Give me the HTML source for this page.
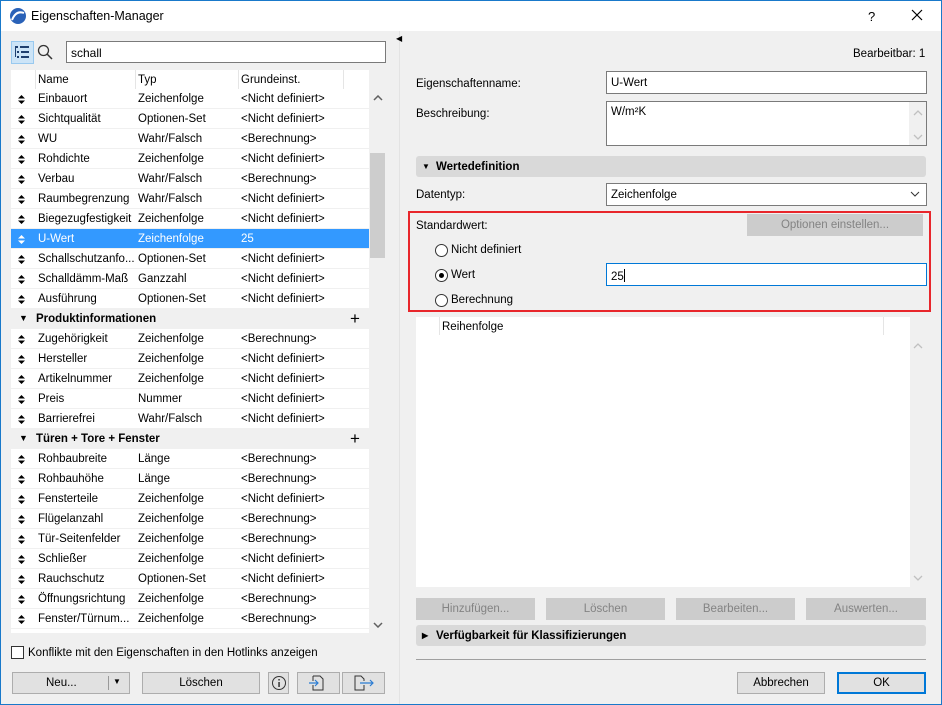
<!DOCTYPE html>
<html><head><meta charset="utf-8"><style>
*{margin:0;padding:0;box-sizing:border-box}
body{width:942px;height:705px;overflow:hidden;font-family:"Liberation Sans",sans-serif;font-size:11.5px;color:#000;background:#f0f0f0;position:relative}
.a{position:absolute}
.win{left:0;top:0;width:942px;height:705px;border:1px solid #1979ca}
.title{left:1px;top:1px;width:940px;height:30px;background:#fff}
.row{position:absolute;left:11px;width:358px;height:20px;border-bottom:1px solid #f0f0f0;background:#fff;white-space:nowrap}
.row span{position:absolute;top:4px}
.row .n{left:27px}.row .t{left:127px}.row .d{left:230px}
.row svg{position:absolute;left:7px;top:6px}
.sel{background:#3399ff;color:#fff}
.sel svg path{fill:#fff}
.grp{background:#f0f0f0;font-weight:bold}
.btn{position:absolute;height:22px;background:#e1e1e1;border:1px solid #adadad;text-align:center;line-height:20px}
.dis{background:#cccccc;border-color:#cccccc;color:#838383}
.inp{position:absolute;background:#fff;border:1px solid #7a7a7a;padding:5px 4px 0}
.rad{position:absolute;width:13px;height:13px;border:1px solid #333;border-radius:50%;background:#fff}
.sec{position:absolute;left:416px;width:510px;height:21px;background:#d9d9d9;border-radius:3px;font-weight:bold;line-height:22px;padding-left:20px}
</style></head><body>
<div class="a win"></div>
<div class="a title"></div>
<svg class="a" style="left:9px;top:7px" width="18" height="18"><circle cx="9" cy="9" r="8" fill="#2a62b8"/><path d="M3 13 Q7 3 15 6" stroke="#fff" stroke-width="2" fill="none"/></svg>
<div class="a" style="left:31px;top:9px;font-size:12.5px">Eigenschaften-Manager</div>
<div class="a" style="left:868px;top:9px;font-size:13px">?</div>
<svg class="a" style="left:911px;top:9px" width="12" height="12"><path d="M1 1L11 11M11 1L1 11" stroke="#000" stroke-width="1.2"/></svg>

<div class="a" style="left:11px;top:41px;width:23px;height:23px;background:#cce4f7;border:1px solid #99c9ef"></div>
<svg class="a" style="left:15px;top:46px" width="15" height="13"><g fill="#1f3f6e"><rect x="0" y="0" width="3" height="2"/><rect x="5" y="0" width="9" height="2"/><rect x="2" y="5" width="2" height="2"/><rect x="6" y="5" width="8" height="2"/><rect x="2" y="10" width="2" height="2"/><rect x="6" y="10" width="8" height="2"/><rect x="0" y="2" width="1" height="9"/></g></svg>
<svg class="a" style="left:37px;top:44px" width="16" height="16"><circle cx="6.5" cy="6.5" r="5" stroke="#333" stroke-width="1.3" fill="none"/><path d="M10 10L15 15" stroke="#333" stroke-width="1.5"/></svg>
<div class="inp" style="left:66px;top:41px;width:320px;height:22px;font-size:12px;padding-top:4px">schall</div>

<div class="a" style="left:11px;top:70px;width:358px;height:563px;background:#fff"></div>
<div class="a" style="left:35px;top:70px;width:1px;height:19px;background:#e5e5e5"></div>
<div class="a" style="left:135px;top:70px;width:1px;height:19px;background:#e5e5e5"></div>
<div class="a" style="left:238px;top:70px;width:1px;height:19px;background:#e5e5e5"></div>
<div class="a" style="left:343px;top:70px;width:1px;height:19px;background:#e5e5e5"></div>
<div class="a" style="left:38px;top:74px">Name</div>
<div class="a" style="left:138px;top:74px">Typ</div>
<div class="a" style="left:241px;top:74px">Grundeinst.</div>
<div class="a" style="left:370px;top:89px;width:15px;height:544px;background:#f0f0f0"></div>
<div class="a" style="left:370px;top:153px;width:15px;height:105px;background:#cdcdcd"></div>
<svg class="a" style="left:373px;top:95px" width="10" height="6"><path d="M1 5L5 1L9 5" stroke="#606060" stroke-width="1.5" fill="none"/></svg>
<svg class="a" style="left:373px;top:622px" width="10" height="6"><path d="M1 1L5 5L9 1" stroke="#606060" stroke-width="1.5" fill="none"/></svg>

<div id="rows"></div>
<div class="row" style="top:89px"><svg width="7" height="9"><path d="M0 3.5L3.5 0L7 3.5ZM0 5.5L3.5 9L7 5.5Z" fill="#000"/></svg><span class="n">Einbauort</span><span class="t">Zeichenfolge</span><span class="d">&lt;Nicht definiert&gt;</span></div>
<div class="row" style="top:109px"><svg width="7" height="9"><path d="M0 3.5L3.5 0L7 3.5ZM0 5.5L3.5 9L7 5.5Z" fill="#000"/></svg><span class="n">Sichtqualität</span><span class="t">Optionen-Set</span><span class="d">&lt;Nicht definiert&gt;</span></div>
<div class="row" style="top:129px"><svg width="7" height="9"><path d="M0 3.5L3.5 0L7 3.5ZM0 5.5L3.5 9L7 5.5Z" fill="#000"/></svg><span class="n">WU</span><span class="t">Wahr/Falsch</span><span class="d">&lt;Berechnung&gt;</span></div>
<div class="row" style="top:149px"><svg width="7" height="9"><path d="M0 3.5L3.5 0L7 3.5ZM0 5.5L3.5 9L7 5.5Z" fill="#000"/></svg><span class="n">Rohdichte</span><span class="t">Zeichenfolge</span><span class="d">&lt;Nicht definiert&gt;</span></div>
<div class="row" style="top:169px"><svg width="7" height="9"><path d="M0 3.5L3.5 0L7 3.5ZM0 5.5L3.5 9L7 5.5Z" fill="#000"/></svg><span class="n">Verbau</span><span class="t">Wahr/Falsch</span><span class="d">&lt;Berechnung&gt;</span></div>
<div class="row" style="top:189px"><svg width="7" height="9"><path d="M0 3.5L3.5 0L7 3.5ZM0 5.5L3.5 9L7 5.5Z" fill="#000"/></svg><span class="n">Raumbegrenzung</span><span class="t">Wahr/Falsch</span><span class="d">&lt;Nicht definiert&gt;</span></div>
<div class="row" style="top:209px"><svg width="7" height="9"><path d="M0 3.5L3.5 0L7 3.5ZM0 5.5L3.5 9L7 5.5Z" fill="#000"/></svg><span class="n">Biegezugfestigkeit</span><span class="t">Zeichenfolge</span><span class="d">&lt;Nicht definiert&gt;</span></div>
<div class="row sel" style="top:229px"><svg width="7" height="9"><path d="M0 3.5L3.5 0L7 3.5ZM0 5.5L3.5 9L7 5.5Z" fill="#000"/></svg><span class="n">U-Wert</span><span class="t">Zeichenfolge</span><span class="d">25</span></div>
<div class="row" style="top:249px"><svg width="7" height="9"><path d="M0 3.5L3.5 0L7 3.5ZM0 5.5L3.5 9L7 5.5Z" fill="#000"/></svg><span class="n">Schallschutzanfo...</span><span class="t">Optionen-Set</span><span class="d">&lt;Nicht definiert&gt;</span></div>
<div class="row" style="top:269px"><svg width="7" height="9"><path d="M0 3.5L3.5 0L7 3.5ZM0 5.5L3.5 9L7 5.5Z" fill="#000"/></svg><span class="n">Schalldämm-Maß</span><span class="t">Ganzzahl</span><span class="d">&lt;Nicht definiert&gt;</span></div>
<div class="row" style="top:289px"><svg width="7" height="9"><path d="M0 3.5L3.5 0L7 3.5ZM0 5.5L3.5 9L7 5.5Z" fill="#000"/></svg><span class="n">Ausführung</span><span class="t">Optionen-Set</span><span class="d">&lt;Nicht definiert&gt;</span></div>
<div class="row grp" style="top:309px"><span style="left:8px;top:4px;font-size:9px">▼</span><span style="left:25px">Produktinformationen</span><span style="left:339px;top:0;font-size:17px;font-weight:normal">+</span></div>
<div class="row" style="top:329px"><svg width="7" height="9"><path d="M0 3.5L3.5 0L7 3.5ZM0 5.5L3.5 9L7 5.5Z" fill="#000"/></svg><span class="n">Zugehörigkeit</span><span class="t">Zeichenfolge</span><span class="d">&lt;Berechnung&gt;</span></div>
<div class="row" style="top:349px"><svg width="7" height="9"><path d="M0 3.5L3.5 0L7 3.5ZM0 5.5L3.5 9L7 5.5Z" fill="#000"/></svg><span class="n">Hersteller</span><span class="t">Zeichenfolge</span><span class="d">&lt;Nicht definiert&gt;</span></div>
<div class="row" style="top:369px"><svg width="7" height="9"><path d="M0 3.5L3.5 0L7 3.5ZM0 5.5L3.5 9L7 5.5Z" fill="#000"/></svg><span class="n">Artikelnummer</span><span class="t">Zeichenfolge</span><span class="d">&lt;Nicht definiert&gt;</span></div>
<div class="row" style="top:389px"><svg width="7" height="9"><path d="M0 3.5L3.5 0L7 3.5ZM0 5.5L3.5 9L7 5.5Z" fill="#000"/></svg><span class="n">Preis</span><span class="t">Nummer</span><span class="d">&lt;Nicht definiert&gt;</span></div>
<div class="row" style="top:409px"><svg width="7" height="9"><path d="M0 3.5L3.5 0L7 3.5ZM0 5.5L3.5 9L7 5.5Z" fill="#000"/></svg><span class="n">Barrierefrei</span><span class="t">Wahr/Falsch</span><span class="d">&lt;Nicht definiert&gt;</span></div>
<div class="row grp" style="top:429px"><span style="left:8px;top:4px;font-size:9px">▼</span><span style="left:25px">Türen + Tore + Fenster</span><span style="left:339px;top:0;font-size:17px;font-weight:normal">+</span></div>
<div class="row" style="top:449px"><svg width="7" height="9"><path d="M0 3.5L3.5 0L7 3.5ZM0 5.5L3.5 9L7 5.5Z" fill="#000"/></svg><span class="n">Rohbaubreite</span><span class="t">Länge</span><span class="d">&lt;Berechnung&gt;</span></div>
<div class="row" style="top:469px"><svg width="7" height="9"><path d="M0 3.5L3.5 0L7 3.5ZM0 5.5L3.5 9L7 5.5Z" fill="#000"/></svg><span class="n">Rohbauhöhe</span><span class="t">Länge</span><span class="d">&lt;Berechnung&gt;</span></div>
<div class="row" style="top:489px"><svg width="7" height="9"><path d="M0 3.5L3.5 0L7 3.5ZM0 5.5L3.5 9L7 5.5Z" fill="#000"/></svg><span class="n">Fensterteile</span><span class="t">Zeichenfolge</span><span class="d">&lt;Nicht definiert&gt;</span></div>
<div class="row" style="top:509px"><svg width="7" height="9"><path d="M0 3.5L3.5 0L7 3.5ZM0 5.5L3.5 9L7 5.5Z" fill="#000"/></svg><span class="n">Flügelanzahl</span><span class="t">Zeichenfolge</span><span class="d">&lt;Berechnung&gt;</span></div>
<div class="row" style="top:529px"><svg width="7" height="9"><path d="M0 3.5L3.5 0L7 3.5ZM0 5.5L3.5 9L7 5.5Z" fill="#000"/></svg><span class="n">Tür-Seitenfelder</span><span class="t">Zeichenfolge</span><span class="d">&lt;Berechnung&gt;</span></div>
<div class="row" style="top:549px"><svg width="7" height="9"><path d="M0 3.5L3.5 0L7 3.5ZM0 5.5L3.5 9L7 5.5Z" fill="#000"/></svg><span class="n">Schließer</span><span class="t">Zeichenfolge</span><span class="d">&lt;Nicht definiert&gt;</span></div>
<div class="row" style="top:569px"><svg width="7" height="9"><path d="M0 3.5L3.5 0L7 3.5ZM0 5.5L3.5 9L7 5.5Z" fill="#000"/></svg><span class="n">Rauchschutz</span><span class="t">Optionen-Set</span><span class="d">&lt;Nicht definiert&gt;</span></div>
<div class="row" style="top:589px"><svg width="7" height="9"><path d="M0 3.5L3.5 0L7 3.5ZM0 5.5L3.5 9L7 5.5Z" fill="#000"/></svg><span class="n">Öffnungsrichtung</span><span class="t">Zeichenfolge</span><span class="d">&lt;Berechnung&gt;</span></div>
<div class="row" style="top:609px"><svg width="7" height="9"><path d="M0 3.5L3.5 0L7 3.5ZM0 5.5L3.5 9L7 5.5Z" fill="#000"/></svg><span class="n">Fenster/Türnum...</span><span class="t">Zeichenfolge</span><span class="d">&lt;Berechnung&gt;</span></div>

<div class="a" style="left:11px;top:646px;width:13px;height:13px;border:1px solid #333;background:#fff"></div>
<div class="a" style="left:28px;top:647px">Konflikte mit den Eigenschaften in den Hotlinks anzeigen</div>
<div class="btn" style="left:12px;top:672px;width:118px;text-align:left;padding-left:33px">Neu...</div>
<div class="a" style="left:108px;top:676px;width:1px;height:14px;background:#999"></div>
<div class="a" style="left:113px;top:677px;font-size:8px">▼</div>
<div class="btn" style="left:142px;top:672px;width:118px">Löschen</div>
<div class="btn" style="left:268px;top:672px;width:21px"></div>
<svg class="a" style="left:271px;top:675px" width="16" height="16"><circle cx="8" cy="8" r="6.5" stroke="#333" fill="none"/><rect x="7.3" y="7" width="1.5" height="5" fill="#333"/><rect x="7.3" y="4" width="1.5" height="1.5" fill="#333"/></svg>
<div class="btn" style="left:297px;top:672px;width:43px"></div>
<svg class="a" style="left:308px;top:674px" width="20" height="18"><path d="M5 2H12L15 5V16H5V11M5 7V2" stroke="#333" fill="none"/><path d="M1 9H10M7 6L10 9L7 12" stroke="#2b7cd3" stroke-width="1.2" fill="none"/></svg>
<div class="btn" style="left:342px;top:672px;width:43px"></div>
<svg class="a" style="left:354px;top:674px" width="22" height="18"><path d="M10 11V16H1V2H7L10 5V7" stroke="#333" fill="none"/><path d="M6 9H19M16 6L19 9L16 12" stroke="#2b7cd3" stroke-width="1.2" fill="none"/></svg>

<div class="a" style="left:399px;top:31px;width:1px;height:673px;background:#e3e3e3"></div>
<div class="a" style="left:396px;top:34px;font-size:8px">◀</div>

<div class="a" style="left:853px;top:48px">Bearbeitbar: 1</div>
<div class="a" style="left:416px;top:78px">Eigenschaftenname:</div>
<div class="inp" style="left:606px;top:71px;width:321px;height:23px">U-Wert</div>
<div class="a" style="left:416px;top:108px">Beschreibung:</div>
<div class="inp" style="left:606px;top:101px;width:321px;height:45px;padding-top:4px">W/m²K</div>
<div class="a" style="left:909px;top:102px;width:17px;height:43px;background:#f0f0f0"></div>
<svg class="a" style="left:913px;top:110px" width="10" height="6"><path d="M1 5L5 1L9 5" stroke="#c0c0c0" stroke-width="1.3" fill="none"/></svg>
<svg class="a" style="left:913px;top:134px" width="10" height="6"><path d="M1 1L5 5L9 1" stroke="#c0c0c0" stroke-width="1.3" fill="none"/></svg>
<div class="sec" style="top:156px"><span style="position:absolute;left:6px;font-size:8px">▼</span>Wertedefinition</div>
<div class="a" style="left:416px;top:189px">Datentyp:</div>
<div class="inp" style="left:606px;top:183px;width:321px;height:23px">Zeichenfolge</div>
<svg class="a" style="left:910px;top:191px" width="10" height="6"><path d="M1 1L5 5L9 1" stroke="#333" fill="none"/></svg>

<div class="a" style="left:408px;top:211px;width:523px;height:101px;border:2px solid #e8262b"></div>
<div class="a" style="left:416px;top:220px">Standardwert:</div>
<div class="btn dis" style="left:747px;top:214px;width:176px">Optionen einstellen...</div>
<div class="rad" style="left:435px;top:244px"></div>
<div class="a" style="left:451px;top:244px">Nicht definiert</div>
<div class="rad" style="left:435px;top:269px"></div>
<div class="a" style="left:439px;top:273px;width:5px;height:5px;border-radius:50%;background:#000"></div>
<div class="a" style="left:451px;top:269px">Wert</div>
<div class="inp" style="left:606px;top:263px;width:321px;height:23px;border-color:#0078d7">25<span style="display:inline-block;width:1px;height:13px;background:#000;vertical-align:-2px"></span></div>
<div class="rad" style="left:435px;top:294px"></div>
<div class="a" style="left:451px;top:294px">Berechnung</div>

<div class="a" style="left:416px;top:317px;width:494px;height:270px;background:#fff"></div>
<div class="a" style="left:439px;top:317px;width:1px;height:18px;background:#e5e5e5"></div>
<div class="a" style="left:883px;top:317px;width:1px;height:18px;background:#e5e5e5"></div>
<div class="a" style="left:442px;top:321px">Reihenfolge</div>
<div class="a" style="left:910px;top:317px;width:16px;height:270px;background:#f0f0f0"></div>
<svg class="a" style="left:913px;top:343px" width="10" height="6"><path d="M1 5L5 1L9 5" stroke="#c0c0c0" stroke-width="1.3" fill="none"/></svg>
<svg class="a" style="left:913px;top:575px" width="10" height="6"><path d="M1 1L5 5L9 1" stroke="#c0c0c0" stroke-width="1.3" fill="none"/></svg>

<div class="btn dis" style="left:416px;top:598px;width:119px">Hinzufügen...</div>
<div class="btn dis" style="left:546px;top:598px;width:119px">Löschen</div>
<div class="btn dis" style="left:676px;top:598px;width:119px">Bearbeiten...</div>
<div class="btn dis" style="left:806px;top:598px;width:120px">Auswerten...</div>
<div class="sec" style="top:625px"><span style="position:absolute;left:6px;font-size:8px">▶</span>Verfügbarkeit für Klassifizierungen</div>
<div class="a" style="left:416px;top:659px;width:510px;height:1px;background:#a0a0a0"></div>
<div class="btn" style="left:737px;top:672px;width:88px">Abbrechen</div>
<div class="btn" style="left:837px;top:672px;width:89px;border:2px solid #0078d7;line-height:18px">OK</div>
</body></html>
